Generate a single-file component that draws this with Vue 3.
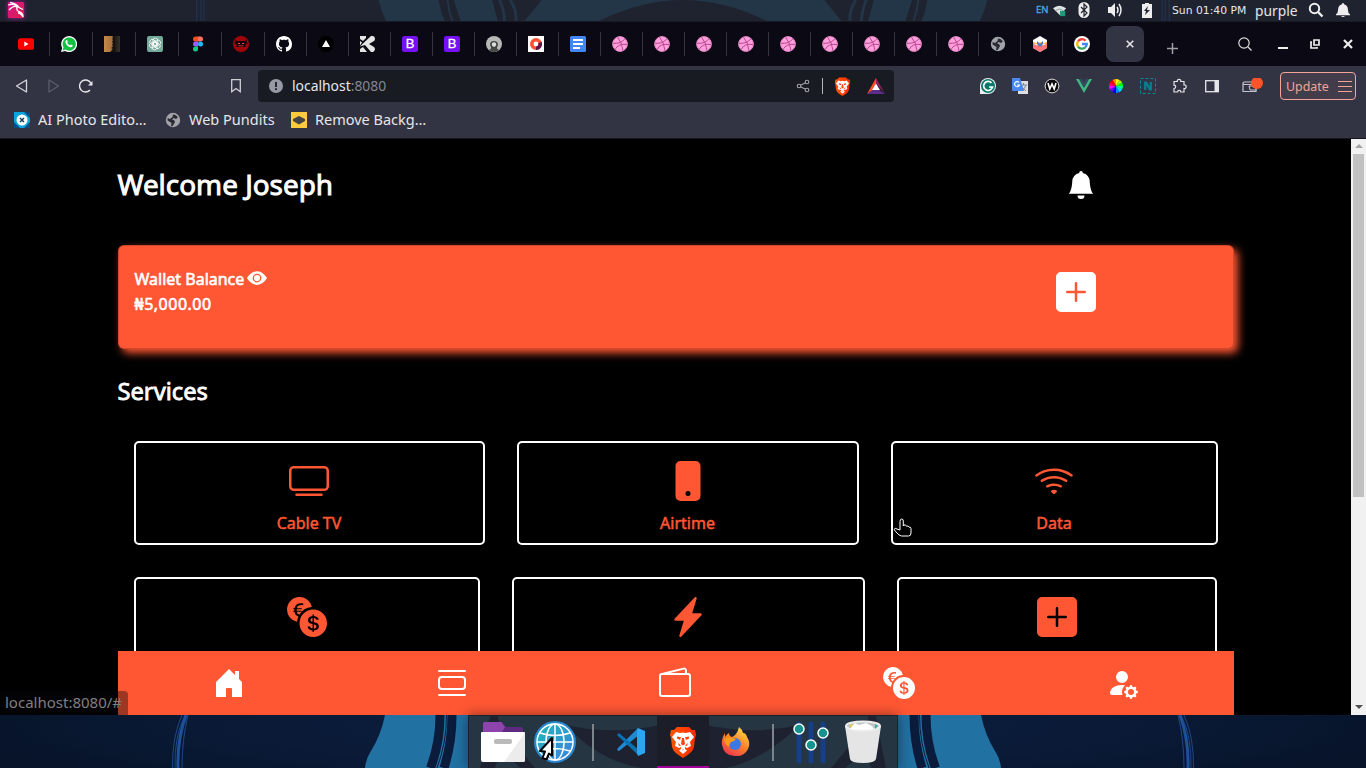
<script setup>
const tabs = [
  'yt', 'wa', 'book', 'gpt', 'figma', 'mask', 'github', 'vercel', 'kick', 'boot', 'boot', 'person', 'ring', 'docs',
  ...Array(9).fill('dribbble'), 'globe', 'hex', 'google',
]
const extensions = ['grammarly', 'translate', 'wcirc', 'vue', 'wheel', 'nbox', 'puzzle', 'panel']
const bookmarks = [
  { icon: 'xphoto', label: 'AI Photo Edito…', w: 152 },
  { icon: 'globe', label: 'Web Pundits', w: 126 },
  { icon: 'layers', label: 'Remove Backg…', w: 150 },
]
const rows = [
  { cls: 'first', items: [{ icon: 'tv', label: 'Cable TV' }, { icon: 'phone', label: 'Airtime' }, { icon: 'wifi', label: 'Data' }] },
  { cls: 'second', items: [{ icon: 'exchange' }, { icon: 'bolt' }, { icon: 'plus' }] },
]
const nav = ['house', 'list', 'wallet', 'exchange', 'gear']
const dock = ['files', 'web', '|', 'code', 'brave', 'firefox', '|', 'sliders', 'trash']
</script>

<template>
  <div class="desktop">
    <svg class="defs" width="0" height="0" aria-hidden="true">
      <defs>
        <linearGradient id="kali" x1="0" x2="1" y2="1"><stop stop-color="#d4148c" /><stop offset="1" stop-color="#e0204a" /></linearGradient>
        <linearGradient id="gweb" x1="0" x2="1" y1="0" y2="1"><stop stop-color="#22b9b4" /><stop offset="1" stop-color="#3a7ee8" /></linearGradient>
        <linearGradient id="gbrave" x1="0" x2="1"><stop stop-color="#ff5500" /><stop offset="1" stop-color="#ff2a00" /></linearGradient>
        <linearGradient id="gfox" x1=".8" x2=".2" y2="1"><stop stop-color="#ffe14a" /><stop offset=".45" stop-color="#ff8a2a" /><stop offset="1" stop-color="#f0304e" /></linearGradient>
        <linearGradient id="gwood" x1="0" x2="1"><stop stop-color="#c58a4a" /><stop offset=".5" stop-color="#a8723c" /><stop offset=".6" stop-color="#17130f" /><stop offset="1" stop-color="#37322c" /></linearGradient>
      </defs>
      <symbol id="yt" viewBox="0 0 16 16"><rect y="2.2" width="16" height="11.6" rx="2.6" fill="#f00" /><path d="M6.3 5.6v4.8L10.5 8z" fill="#fff" /></symbol>
      <symbol id="wa" viewBox="0 0 16 16"><path d="M0 16l1.2-4A8 8 0 1 1 4.2 15z" fill="#fff" /><path d="M1.6 14.4l.9-3A6.6 6.6 0 1 1 4.6 13.6z" fill="#12c143" /><path d="M4.9 4.4c.5-.6 1.1-.5 1.4.1l.5 1.2c.1.4-.6.9-.5 1.2.5 1 1.4 1.8 2.5 2.3.4.1.8-.9 1.2-.8l1.4.7c.6.3.3 1.3-.3 1.7-1.5.9-3.4 0-4.9-1.4S3.8 5.9 4.9 4.4z" fill="#fff" /></symbol>
      <symbol id="book" viewBox="0 0 16 16"><rect width="16" height="16" fill="url(#gwood)" /><path d="M11 0H9l1 2-2 1 2 1-2 2 2 1-2 2 2 1-3 2 2 1-3 3h5z" fill="#16120e" /></symbol>
      <symbol id="gpt" viewBox="0 0 16 16"><rect width="16" height="16" rx="2" fill="#75a99c" /><g fill="none" stroke="#fff" stroke-width=".8"><rect v-for="a in 6" :key="a" x="6" y="2.2" width="4.8" height="7.4" rx="2.2" :transform="`rotate(${a * 60} 8 8)`" /></g></symbol>
      <symbol id="figma" viewBox="0 0 16 16"><path d="M8 .5H5.500a2.500 2.500 0 0 0 0 5H8z" fill="#f24e1e" /><path d="M8 .5h2.500a2.500 2.500 0 0 1 0 5H8z" fill="#ff7262" /><path d="M8 5.500H5.500a2.500 2.500 0 0 0 0 5H8z" fill="#a259ff" /><circle cx="10.500" cy="8" r="2.500" fill="#1abcfe" /><path d="M8 10.500H5.500A2.500 2.500 0 1 0 8 13z" fill="#0acf83" /></symbol>
      <symbol id="mask" viewBox="0 0 16 16"><circle cx="8" cy="8" r="8" fill="#a0050a" /><path d="M2 3.500l2 1.500h8l2-1.500-.500 3L15 7l-2.500 1.500V11h-9V8.500L1 7l1.500-.500z" fill="#160206" /><path d="M5 7h2v1H5zm4 0h2v1H9zM5.500 9.500h5v.8h-5z" fill="#ff4c42" /></symbol>
      <symbol id="github" viewBox="0 0 16 16"><path fill="#fff" d="M8 0C3.580 0 0 3.580 0 8c0 3.540 2.290 6.530 5.470 7.590.4.070.55-.17.55-.38 0-.19-.01-.82-.01-1.490-2.010.37-2.530-.49-2.690-.94-.09-.23-.48-.94-.82-1.130-.28-.15-.68-.52-.01-.53.63-.01 1.080.58 1.230.82.72 1.210 1.870.87 2.330.66.07-.52.28-.87.51-1.070-1.780-.2-3.640-.89-3.640-3.950 0-.87.31-1.590.82-2.150-.08-.2-.36-1.020.08-2.120 0 0 .67-.21 2.200.82.64-.18 1.320-.27 2-.27s1.360.09 2 .27c1.530-1.040 2.200-.82 2.200-.82.44 1.100.16 1.920.08 2.120.51.56.82 1.270.82 2.150 0 3.070-1.870 3.750-3.650 3.950.29.25.54.73.54 1.480 0 1.070-.01 1.930-.01 2.200 0 .21.15.46.55.38A8.010 8.010 0 0 0 16 8c0-4.420-3.580-8-8-8" /></symbol>
      <symbol id="vercel" viewBox="0 0 16 16"><circle cx="8" cy="8" r="8" fill="#000" /><path d="M8 4l4 7H4z" fill="#fff" /></symbol>
      <symbol id="kick" viewBox="0 0 16 16"><path d="M0 0h6v2L3 5 0 3zM0 5l2 1.500-2 3zM0 10.500l3-3L11 0h2a3 3 0 0 1 1 5L9 8l5 3a3 3 0 0 1-1 5h-2L5 9zM0 16v-3l3-2 4 5z" fill="#e5e5e5" /></symbol>
      <symbol id="person" viewBox="0 0 16 16"><circle cx="8" cy="8" r="8" fill="#b8b9b6" /><path d="M4 9a4 4 0 1 1 8 0l-1 2v4H5v-4z" fill="#40433f" /><circle cx="8" cy="8.500" r="2.200" fill="#ddd" /><path d="M3 14q5-5 10 0-5 4-10 0" fill="#454845" /></symbol>
      <symbol id="ring" viewBox="0 0 16 16"><rect width="16" height="16" fill="#fff" /><circle cx="8" cy="8" r="4.200" fill="none" stroke="#ff5339" stroke-width="3.600" /><path d="M12 6.500A4.200 4.200 0 0 1 8 12.200" fill="none" stroke="#5c1746" stroke-width="3.600" /></symbol>
      <symbol id="docs" viewBox="0 0 16 16"><rect width="16" height="16" rx="1.500" fill="#4286f5" /><path d="M3 4h10M3 8h10M3 12h7" stroke="#fff" stroke-width="2" /></symbol>
      <symbol id="dribbble" viewBox="0 0 16 16"><circle cx="8" cy="8" r="7.400" fill="#ff9fdc" stroke="#e283c4" stroke-width="1" /><path d="M5.500 1.200Q10 6 11 14.800M1 7.300Q9 8 13 2.700M3 13.500Q6.500 7 15 8.500" fill="none" stroke="#b9478f" stroke-width="1" /></symbol>
      <symbol id="globe" viewBox="0 0 16 16"><circle cx="8" cy="8" r="7.200" fill="#a2a4aa" /><path d="M8 2.500c2 0 4 1 4.800 3L11 7 8.500 6 7 7.500l2 .5 1 2-2.500 4.200-1.500-.400L6.500 11 2.600 8.500 2.600 6 5 7l2.500-2z" fill="#292b34" /></symbol>
      <symbol id="hex" viewBox="0 0 16 16"><path d="M8 0l7 4v8l-7 4-7-4V4z" fill="#fff" /><path d="M1 5.500l3 1.500 4-1 4 1 3-1.500V8H1z" fill="#ffbc4d" /><path d="M1 7q4 4 7 1 3 3 7-1v5l-7 4-7-4z" fill="#f97777" /><path d="M5 5l3 3 3-3v3l-3 3-3-3z" fill="#4c76c8" /></symbol>
      <symbol id="google" viewBox="0 0 16 16"><circle cx="8" cy="8" r="8" fill="#fff" /><g fill="none" stroke-width="2.300"><path d="M11.500 4.700A4.800 4.800 0 0 0 4 5.400" stroke="#ea4335" /><path d="M4 5.400a4.800 4.800 0 0 0 0 5.200" stroke="#fbbc05" /><path d="M4 10.600a4.800 4.800 0 0 0 7 1" stroke="#34a853" /><path d="M11 11.600A4.800 4.800 0 0 0 12.800 8H8" stroke="#4285f4" /></g></symbol>

      <symbol id="grammarly" viewBox="0 0 16 16"><path d="M0 16V8a8 8 0 1 1 8 8z" fill="#e9eeee" /><circle cx="8" cy="8" r="7" fill="#08796a" /><path d="M11.500 5A4.500 4.500 0 1 0 12.500 9H9" fill="none" stroke="#fff" stroke-width="1.700" /></symbol>
      <symbol id="translate" viewBox="0 0 16 16"><rect x="6" y="3" width="10" height="13" fill="#dedede" /><path d="M8 7h7M11.500 5v2M14 7q-1 4-5 6M10 9l4 4" stroke="#778899" fill="none" /><path d="M0 0h8l4 13H1a1 1 0 0 1-1-1z" fill="#4a88ee" /><path d="M7 4.500A2.500 2.500 0 1 0 7.500 7H5" fill="none" stroke="#fff" stroke-width="1.100" /></symbol>
      <symbol id="wcirc" viewBox="0 0 16 16"><circle cx="8" cy="8" r="6.900" fill="#0a0a0a" stroke="#ddd" stroke-width="1" /><path d="M4 5l1.800 6L8 6l2.200 5L12 5" fill="none" stroke="#fff" stroke-width="1.600" /></symbol>
      <symbol id="vue" viewBox="0 0 16 16"><path d="M0 1h3l5 8.700L13 1h3L8 15z" fill="#41b883" /><path d="M3 1h3.200L8 4l1.800-3H13L8 9.700z" fill="#35495e" /></symbol>
      <symbol id="wheel" viewBox="0 0 16 16"><path v-for="(c, i) in ['#f4f800', '#f80', '#f00', '#f06', '#f0f', '#60f', '#00e', '#08f', '#0df', '#0f8', '#0f0', '#9f0']" :key="c" d="M8 8V1a7 7 0 0 1 3.500.940z" :fill="c" :transform="`rotate(${i * -30} 8 8)`" /></symbol>
      <symbol id="nbox" viewBox="0 0 16 16"><rect x=".5" y=".5" width="15" height="15" fill="none" stroke="#0c8796" stroke-dasharray="3 2" /><path d="M5.200 12V4.500h1l3.600 7h1V4" fill="none" stroke="#077f91" stroke-width="2.200" /></symbol>
      <symbol id="puzzle" viewBox="0 0 16 16"><path d="M2 3.500h3.300a1.800 1.800 0 1 1 3.500 0H12V7a1.800 1.800 0 1 1 0 3.500V14H8.800a1.600 1.600 0 0 0-3.200 0H2v-3.500a1.700 1.700 0 0 0 0-3.400z" fill="none" stroke="#e2e3e8" stroke-width="1.200" /></symbol>
      <symbol id="panel" viewBox="0 0 16 16"><rect x="1.700" y="2.700" width="12.600" height="11" fill="none" stroke="#e6e6ea" stroke-width="1.300" /><path d="M10.500 2h4v12h-4z" fill="#e6e6ea" /></symbol>
      <symbol id="purse" viewBox="0 0 22 16"><path d="M15 6V4H3.500A1.500 1.500 0 0 0 2 5.500v8h13v-2.500M2 5.500q0 1 1.500 1H15" fill="none" stroke="#c4c5cc" stroke-width="1.200" /><path d="M8 8h7v4H9z" fill="#323443" stroke="#c4c5cc" /><circle cx="16" cy="5" r="6" fill="#fb542b" /></symbol>
      <symbol id="xphoto" viewBox="0 0 16 16"><rect width="16" height="16" fill="#0aa4dd" /><path d="M0 10l6 6H0zM10 0h6v6zM16 10l-6 6h6z" fill="#064b85" /><circle cx="8" cy="8" r="5.500" fill="#fff" /><path d="M6 6l4 4m0-4l-4 4" stroke="#123c66" stroke-width="1.500" /></symbol>
      <symbol id="layers" viewBox="0 0 16 16"><rect width="16" height="16" fill="#ffca3c" /><path d="M2 7l6-3 6 3v2l-6 3.500L2 9z" fill="#454545" /></symbol>
      <symbol id="brave" viewBox="0 0 28 32"><path d="M8 1h12l3 3 3 0 1 5-1 3-1 9q-1 4-5 7l-6 4-6-4q-4-3-5-7L2 12 1 9l1-5 3 0z" fill="url(#gbrave)" /><path d="M7 6l4 1 3-.5 3 .5 4-1 4 5-4 5 1 4-4 2-2-1 0 2 2 1.500-4 3.500-4-3.500 2-1.500 0-2-2 1-4-2 1-4-4-5z" fill="#fff" /><path d="M8 10.500l4 .8-1 2.700-3-1.500zm12 0l-4 .8 1 2.700 3-1.500zM13 12h2l1 6-2 1.500-2-1.500zM9 17l3 2.500-2 .5zm10 0l-3 2.500 2 .5zM13 23.500h2l-1 .8z" fill="#ff4310" /></symbol>
      <symbol id="bat" viewBox="0 0 18 16"><path d="M9 0L0 16l9-6z" fill="#ff4b24" /><path d="M9 0v5l9 11z" fill="#9c1f63" /><path d="M0 16h18l-6-4H6z" fill="#5b2d8c" /><path d="M9 5.500l4 6.500H5z" fill="#fff" /></symbol>

      <symbol id="bell" viewBox="0 0 16 16"><path d="M8 16a2 2 0 0 0 2-2H6a2 2 0 0 0 2 2m.995-14.901a1 1 0 1 0-1.990 0A5 5 0 0 0 3 6c0 1.098-.5 6-2 7h14c-1.500-1-2-5.902-2-7 0-2.420-1.720-4.440-4.005-4.901" /></symbol>
      <symbol id="eye" viewBox="0 0 16 16"><path d="M10.500 8a2.500 2.500 0 1 1-5 0 2.500 2.500 0 0 1 5 0" /><path d="M0 8s3-5.500 8-5.500S16 8 16 8s-3 5.500-8 5.500S0 8 0 8m8 3.500a3.500 3.500 0 1 0 0-7 3.500 3.500 0 0 0 0 7" /></symbol>
      <symbol id="plus" viewBox="0 0 16 16"><path d="M2 0a2 2 0 0 0-2 2v12a2 2 0 0 0 2 2h12a2 2 0 0 0 2-2V2a2 2 0 0 0-2-2zm6.500 4.500v3h3a.5.5 0 0 1 0 1h-3v3a.5.5 0 0 1-1 0v-3h-3a.5.5 0 0 1 0-1h3v-3a.5.5 0 0 1 1 0" /></symbol>
      <symbol id="tv" viewBox="0 0 16 16"><path d="M2.500 13.500A.5.5 0 0 1 3 13h10a.5.5 0 0 1 0 1H3a.5.5 0 0 1-.5-.5M13.991 3l.024.001a1.500 1.500 0 0 1 .538.143.76.76 0 0 1 .302.254c.067.1.145.277.145.602v5.991l-.001.024a1.500 1.500 0 0 1-.143.538.76.76 0 0 1-.254.302c-.1.067-.277.145-.602.145H2.009l-.024-.001a1.500 1.500 0 0 1-.538-.143.76.76 0 0 1-.302-.254C1.078 10.502 1 10.325 1 10V4.009l.001-.024a1.500 1.500 0 0 1 .143-.538.76.76 0 0 1 .254-.302C1.498 3.078 1.675 3 2 3zM14 2H2C0 2 0 4 0 4v6c0 2 2 2 2 2h12c2 0 2-2 2-2V4c0-2-2-2-2-2" /></symbol>
      <symbol id="phone" viewBox="0 0 16 16"><path d="M3 2a2 2 0 0 1 2-2h6a2 2 0 0 1 2 2v12a2 2 0 0 1-2 2H5a2 2 0 0 1-2-2zm6 11a1 1 0 1 0-2 0 1 1 0 0 0 2 0" /></symbol>
      <symbol id="wifi" viewBox="0 0 16 16"><path d="M15.384 6.115a.485.485 0 0 0-.047-.736A12.440 12.440 0 0 0 8 3C5.259 3 2.723 3.882.663 5.379a.485.485 0 0 0-.048.736.52.52 0 0 0 .668.05A11.450 11.450 0 0 1 8 4c2.507 0 4.827.802 6.716 2.164.205.148.49.13.668-.049" /><path d="M13.229 8.271a.482.482 0 0 0-.063-.745A9.460 9.460 0 0 0 8 6c-1.905 0-3.680.56-5.166 1.526a.48.48 0 0 0-.063.745.525.525 0 0 0 .652.065A8.460 8.460 0 0 1 8 7a8.460 8.460 0 0 1 4.576 1.336c.206.132.48.108.653-.065m-2.183 2.183c.226-.226.185-.605-.1-.75A6.500 6.500 0 0 0 8 9c-1.060 0-2.062.254-2.946.704-.285.145-.326.524-.1.75l.015.015c.16.16.407.19.611.09A5.500 5.500 0 0 1 8 10c.868 0 1.690.201 2.420.56.203.1.45.07.61-.091zM9.060 12.440c.196-.196.198-.52-.04-.66A2 2 0 0 0 8 11.500a2 2 0 0 0-1.020.28c-.238.14-.236.464-.04.66l.706.706a.5.5 0 0 0 .707 0z" /></symbol>
      <symbol id="exchange" viewBox="0 0 16 16"><path d="M0 5a5 5 0 0 0 4.027 4.905 6.500 6.500 0 0 1 .544-2.073C3.695 7.536 3.132 6.864 3 5.910h-.5v-.426h.466V5.050q-.001-.07.004-.135H2.500v-.427h.511C3.236 3.240 4.213 2.500 5.681 2.500c.316 0 .59.031.819.085v.733a3.500 3.500 0 0 0-.815-.082c-.919 0-1.538.466-1.734 1.252h1.917v.427h-1.980q-.004.07-.003.147v.422h1.983v.427H3.930c.118.602.468 1.030 1.005 1.229a6.500 6.500 0 0 1 4.970-3.113A5.002 5.002 0 0 0 0 5m16 5.500a5.500 5.500 0 1 1-11 0 5.500 5.500 0 0 1 11 0m-7.750 1.322c.069.835.746 1.485 1.964 1.562V14h.54v-.62c1.259-.086 1.996-.74 1.996-1.690 0-.865-.563-1.310-1.570-1.540l-.426-.1V8.374c.54.06.884.347.966.745h.948c-.07-.804-.779-1.433-1.914-1.502V7h-.54v.629c-1.076.103-1.808.732-1.808 1.622 0 .787.544 1.288 1.450 1.493l.358.085v1.780c-.554-.08-.92-.376-1.003-.787zm1.960-1.895c-.532-.12-.82-.364-.82-.732 0-.41.311-.719.824-.809v1.540h-.003zm.622 1.044c.645.145.943.38.943.796 0 .474-.37.8-1.020.86v-1.674z" /></symbol>
      <symbol id="bolt" viewBox="0 0 16 16"><path d="M11.251.068a.5.5 0 0 1 .227.58L9.677 6.500H13a.5.5 0 0 1 .364.843l-8 8.500a.5.5 0 0 1-.842-.49L6.323 9.500H3a.5.5 0 0 1-.364-.843l8-8.500a.5.5 0 0 1 .615-.09z" /></symbol>
      <symbol id="house" viewBox="0 0 32 32"><path d="M16 2l6 6V4h4v8l3 3v15H19v-8q0-1-1-1h-4q-1 0-1 1v8H3V15z" /></symbol>
      <symbol id="list" viewBox="0 0 16 16"><path d="M3 4.500h10a2 2 0 0 1 2 2v3a2 2 0 0 1-2 2H3a2 2 0 0 1-2-2v-3a2 2 0 0 1 2-2m0 1a1 1 0 0 0-1 1v3a1 1 0 0 0 1 1h10a1 1 0 0 0 1-1v-3a1 1 0 0 0-1-1zM1 2a.5.5 0 0 1 .5-.5h13a.5.5 0 0 1 0 1h-13A.5.5 0 0 1 1 2m0 12a.5.5 0 0 1 .5-.5h13a.5.5 0 0 1 0 1h-13A.5.5 0 0 1 1 14" /></symbol>
      <symbol id="wallet" viewBox="0 0 16 16"><path d="M12.136.326A1.500 1.500 0 0 1 14 1.780V3h.5A1.500 1.500 0 0 1 16 4.500v9a1.500 1.500 0 0 1-1.500 1.500h-13A1.500 1.500 0 0 1 0 13.500v-9a1.500 1.500 0 0 1 1.432-1.499zM5.562 3H13V1.780a.5.5 0 0 0-.621-.484zM1.500 4a.5.5 0 0 0-.5.5v9a.5.5 0 0 0 .5.5h13a.5.5 0 0 0 .5-.5v-9a.5.5 0 0 0-.5-.5z" /></symbol>
      <symbol id="gear" viewBox="0 0 16 16"><path d="M11 5a3 3 0 1 1-6 0 3 3 0 0 1 6 0m-9 8c0 1 1 1 1 1h5.256A4.500 4.500 0 0 1 8 12.500a4.500 4.500 0 0 1 1.544-3.393Q8.844 9.002 8 9c-5 0-6 3-6 4m9.886-3.540c.18-.613 1.048-.613 1.229 0l.043.148a.64.64 0 0 0 .921.382l.136-.074c.561-.306 1.175.308.87.869l-.075.136a.64.64 0 0 0 .382.92l.149.045c.612.18.612 1.048 0 1.229l-.15.043a.64.64 0 0 0-.38.921l.074.136c.305.561-.309 1.175-.87.87l-.136-.075a.64.64 0 0 0-.92.382l-.045.149c-.18.612-1.048.612-1.229 0l-.043-.15a.64.64 0 0 0-.921-.38l-.136.074c-.561.305-1.175-.309-.87-.87l.075-.136a.64.64 0 0 0-.382-.92l-.148-.044c-.613-.181-.613-1.049 0-1.230l.148-.043a.64.64 0 0 0 .382-.921l-.074-.136c-.306-.561.308-1.175.869-.87l.136.075a.64.64 0 0 0 .92-.382zM14 12.500a1.500 1.500 0 1 0-3 0 1.500 1.500 0 0 0 3 0" /></symbol>

      <symbol id="files" viewBox="0 0 52 52"><path d="M6 21V9q0-2 2-2h17l4 5h15q2 0 2 2v7z" fill="#5e2a80" /><path d="M6 20V9q0-2 2-2h16l4 5-3 5H6z" fill="#8e44ad" /><path d="M4 18q0-1 1-1h42q1 0 1 1v27q0 2-2 2H6q-2 0-2-2z" fill="#fff" /><path d="M48 18v27q0 2-2 2H27z" fill="#ececec" /><rect x="17" y="24" width="18" height="5" rx="2" fill="#bababa" /></symbol>
      <symbol id="web" viewBox="0 0 52 52"><circle cx="26" cy="27" r="20" fill="url(#gweb)" stroke="#2a86cf" stroke-width="2" /><g fill="none" stroke="#fff" stroke-width="1.500"><circle cx="26" cy="27" r="18" /><ellipse cx="26" cy="27" rx="9" ry="18" /><path d="M26 9v36M8 27h36M11 18q15 5 30 0M11 36q15-5 30 0" /></g><path d="M23 23v17.500l-3-2-2.500 6-4-1.500 2.500-6.500-5-.500z" fill="#fff" stroke="#000" stroke-width="2" stroke-linejoin="round" /></symbol>
      <symbol id="code" viewBox="0 0 52 52"><path d="M33 13l-20 20-1 2 2 1 20-16z" fill="#1f8ad2" /><path d="M12 20l2-2 20 17-1 5z" fill="#0870b5" /><path d="M33 13l7 3v22l-7 3-1-3V16z" fill="#2ba7f0" /></symbol>
      <symbol id="firefox" viewBox="0 0 52 52"><path d="M30 12q3 2 4 6 3 0 4 4 4 6 1 12-4 8-13 7-11 0-13-11-1-6 3-12v4q2-3 4-4 0 3 3 4 5-2 7-10z" fill="url(#gfox)" /><circle cx="26" cy="29" r="6" fill="#3a78e8" /><path d="M15 24q5-3 12 0-2 3-5 3-2 2-2 5-4-2-5-8z" fill="#ff9a1d" /></symbol>
      <symbol id="sliders" viewBox="0 0 52 52"><path d="M14 9v37M26 9v37M38 9v37" stroke="#173f88" stroke-width="5" stroke-linecap="round" /><g fill="#14938f" stroke="#fff" stroke-width="1.500"><circle cx="14" cy="14" r="5" /><circle cx="26" cy="30" r="5" /><circle cx="38" cy="18" r="5" /></g></symbol>
      <symbol id="trash" viewBox="0 0 52 52"><path d="M8 11l5 33q1 4 13 4t13-4l5-33z" fill="#e5e5e5" /><ellipse cx="26" cy="11" rx="17" ry="4.500" fill="#bfc4c4" stroke="#eee" stroke-width="2" /><path d="M14 12l4-4 4 2 7-2 6 3 2 3q-11 2-23 0z" fill="#fff" /><path d="M12 10l4-1-2 4z" fill="#ecc84b" /><path d="M38 9l3 2-3 3z" fill="#38a9a0" /></symbol>
    </svg>

    <header class="panel">
      <svg class="wall" viewBox="0 0 1366 22">
        <g v-for="m in 2" :key="m" :transform="m === 2 ? 'matrix(-1 0 0 1 1366 0)' : ''">
          <path d="M173.500 0v22M178 0v22M181 0v22" stroke="#21314c" stroke-width="1.500" />
          <path d="M364 0q3 12 8 22h61q-4-10-6-22z" fill="#233647" />
          <path d="M436.500 0q1 12 5 22" stroke="#233647" stroke-width="2" fill="none" />
          <path d="M443 0H483l6 22H450z" fill="#233647" />
          <path d="M491 0q5 12 5 22M502 0q7 11 6 22" stroke="#233647" stroke-width="3" fill="none" />
          <path d="M535 0H683Q640 0 595 22H517z" fill="#233647" />
        </g>
      </svg>
      <svg class="kali" viewBox="0 0 18 18"><rect x="1" y="1" width="16" height="16" rx="1" fill="url(#kali)" /><path d="M1 4q6-2 10 2M3 1.500q6 1 9 5l4 2M2 9q5-5 8-3-1 4 3 5 3 1 3 5-2-4-5-4" fill="none" stroke="#fff" stroke-width="1.300" /></svg>
      <span class="lang">EN</span>
      <svg class="ic wf" viewBox="0 0 16 16"><path d="M0 6q7-6 15 0l-7 8z" fill="#dfe2e4" /><path d="M3 9q4-4 9 0" stroke="#8a8e94" fill="none" /><rect x="8" y="9" width="6" height="6" fill="#23977a" /></svg>
      <svg class="ic bt" viewBox="0 0 16 16"><rect x="2.500" width="11" height="16" rx="5.500" fill="#eee" /><path d="M5 5l6 6-3 3V2l3 3-6 6" fill="none" stroke="#222733" stroke-width="1.200" /></svg>
      <svg class="ic vol" viewBox="0 0 16 16"><path d="M1 5h3l4-4v14l-4-4H1z" fill="#eee" /><path d="M10 5q2 3 0 6M12 2q4 6 0 12" fill="none" stroke="#eee" stroke-width="1.500" /></svg>
      <svg class="ic batt" viewBox="0 0 16 16"><path d="M3 2h3V1h4v1h3v14H3z" fill="#eee" /><path d="M9 4L5 9h2l-1 4 5-5H8z" fill="#222733" /></svg>
      <span class="clock">Sun 01:40 PM</span>
      <span class="user">purple</span>
      <svg class="ic sr" viewBox="0 0 16 16"><circle cx="6.500" cy="6.500" r="4.700" fill="none" stroke="#eee" stroke-width="2" /><path d="M10 10l4.500 4.500" stroke="#eee" stroke-width="2.400" /></svg>
      <svg class="ic bl" viewBox="0 0 16 16" fill="#eee"><path d="M8 1q1 0 1 1.200 4 1 4 6 0 3 2 4v1H1v-1q2-1 2-4 0-5 4-6Q7 1 8 1M6 14h4q-2 2-4 0" /></svg>
    </header>

    <div class="tabs">
      <div v-for="(t, i) in tabs" :key="i" class="tab" :class="{ wide: i < 6, last: i === 25 }"><span v-if="t === 'boot'" class="boot">B</span><svg v-else><use :href="'#' + t" /></svg></div>
      <div class="active"><svg viewBox="0 0 8 8"><path d="M.7.7l6.600 6.600m0-6.600L.7 7.300" stroke="#e8e8ee" stroke-width="1.500" /></svg></div>
      <svg class="add" viewBox="0 0 11 11"><path d="M5.500 0v11M0 5.500h11" stroke="#9e9ea5" stroke-width="1.500" /></svg>
      <svg class="find" viewBox="0 0 14 14"><circle cx="6" cy="6" r="5.200" fill="none" stroke="#ddd" stroke-width="1.200" /><path d="M10 10l3.500 3.500" stroke="#ddd" stroke-width="1.300" /></svg>
      <svg class="win min" viewBox="0 0 10 10"><path d="M0 9h10" stroke="#eee" stroke-width="2" /></svg>
      <svg class="win max" viewBox="0 0 10 10"><path d="M4 1h5v5H4zM2 3H1v6h6V8" fill="none" stroke="#eee" stroke-width="1.700" /></svg>
      <svg class="win cls" viewBox="0 0 10 10"><path d="M1 1l8 8m0-8L1 9" stroke="#eee" stroke-width="2.200" /></svg>
    </div>

    <div class="bar">
      <svg class="nv" viewBox="0 0 16 16"><path d="M12.500 2v12L2.500 8z" fill="none" stroke="#d3d4da" stroke-width="1.300" stroke-linejoin="round" /></svg>
      <svg class="nv" viewBox="0 0 16 16"><path d="M3 2v12L12.500 8z" fill="none" stroke="#5a5c69" stroke-width="1.300" stroke-linejoin="round" /></svg>
      <svg class="nv" viewBox="0 0 16 16"><path d="M12 12A6 6 0 1 1 13 5.500" fill="none" stroke="#e8e8ec" stroke-width="1.400" /><path d="M14.500 3v4.500H10z" fill="#e8e8ec" /></svg>
      <svg class="nv bm" viewBox="0 0 16 16"><path d="M3.700 1.700h8.600v12L8 10.500l-4.300 3.200z" fill="none" stroke="#cfd0d6" stroke-width="1.300" /></svg>
      <div class="url">
        <svg class="info" viewBox="0 0 14 14"><circle cx="7" cy="7" r="7" fill="#979aa4" /><path d="M7 3v5M7 9.200v1.800" stroke="#191b22" stroke-width="1.800" /></svg>
        <span>localhost<i>:8080</i></span>
        <svg class="share" viewBox="0 0 14 14"><path d="M3 7l8-4M3 7l8 4" stroke="#a2a3a8" stroke-width="1.100" /><g fill="#191b22" stroke="#a2a3a8" stroke-width="1.100"><circle cx="3" cy="7" r="1.800" /><circle cx="11" cy="3" r="1.800" /><circle cx="11" cy="11" r="1.800" /></g></svg>
        <b class="vr"></b>
        <svg class="lion"><use href="#brave" /></svg>
        <svg class="tri"><use href="#bat" /></svg>
      </div>
      <div class="exts"><svg v-for="e in extensions" :key="e"><use :href="'#' + e" /></svg></div>
      <svg class="purse"><use href="#purse" /></svg>
      <div class="update"><span>Update</span><svg viewBox="0 0 14 11"><path d="M0 .5h14M0 5.500h14M0 10.500h14" stroke="#f2a49b" stroke-width="1.100" /></svg></div>
    </div>

    <div class="marks">
      <div v-for="b in bookmarks" :key="b.label" class="mark" :style="{ width: b.w + 'px' }"><svg><use :href="'#' + b.icon" /></svg><span>{{ b.label }}</span></div>
    </div>

    <main class="page">
      <section class="view">
        <div class="content">
          <div class="hello"><h1>Welcome Joseph</h1><svg><use href="#bell" /></svg></div>
          <div class="card">
            <div><p>Wallet Balance <svg><use href="#eye" /></svg></p><p class="sum">₦5,000.00</p></div>
            <svg class="plus"><use href="#plus" /></svg>
          </div>
          <h2>Services</h2>
          <div v-for="r in rows" :key="r.cls" class="row" :class="r.cls">
            <div v-for="s in r.items" :key="s.icon" class="svc"><svg><use :href="'#' + s.icon" /></svg><span v-if="s.label">{{ s.label }}</span></div>
          </div>
        </div>
        <nav class="bottom"><a v-for="n in nav" :key="n"><svg><use :href="'#' + n" /></svg></a></nav>
        <div class="status">localhost:8080/#</div>
        <svg class="hand" viewBox="0 0 20 20"><path d="M8 12V3.500Q8 1 9.700 1t1.600 2V8q.400-1.500 2-1 .900.300 1 1.200 2-.800 2.700.900 2-.400 2 1.400v4.500q0 3-2.500 3H9.500Q7 17.500 5 15L2 11.500q1-2 3-.5z" fill="#000" stroke="#fff" stroke-width="1" /></svg>
      </section>
      <aside class="scroll"><i class="up"></i><b></b><i class="down"></i></aside>
    </main>

    <footer class="foot">
      <svg class="wall" viewBox="0 0 1366 53">
        <g v-for="m in 2" :key="m" :transform="m === 2 ? 'matrix(-1 0 0 1 1366 0)' : ''">
          <path d="M182 0Q172 22 172.500 53M185 0Q174 22 175 53M188 0Q182 25 182 53" stroke="#1d478a" fill="none" />
          <path d="M186 0Q177 25 178 53" stroke="#1f509c" stroke-width="3" fill="none" />
          <path d="M385 0Q381 20 371 36 366 43 365 53H500V0z" fill="#2171a2" />
          <path d="M440 0Q440 28 430.500 53M452 0Q452 28 444 53" stroke="#0b1b3b" stroke-width="9" fill="none" />
          <path d="M446.500 0Q446.500 28 437 53" stroke="#0b1b3b" stroke-width="1" fill="none" />
        </g>
      </svg>
      <div class="dock">
        <svg class="dockbg" viewBox="0 0 430 53"><path d="M98 9Q155 22 215 3 275 22 332 9 285 53 245 53H185Q135 50 98 9zM22 0h8l0 4q14 22 38 49H54L34 36 26 53H12zM408 0h-8v4q-14 22-38 49h14l20-17 8 17h14z" fill="#1e2230" /></svg>
        <div v-for="(d, i) in dock" :key="i" :class="[d === '|' ? 'sep' : 'app', { on: d === 'brave' }]"><svg v-if="d !== '|'" :class="d"><use :href="'#' + d" /></svg></div>
      </div>
    </footer>
  </div>
</template>

<style>
html, body { margin: 0; overflow: hidden; background: #000; }
</style>

<style scoped>
* { box-sizing: border-box; }
svg { flex: none; display: block; }
.defs { position: absolute; }
.desktop { width: 1366px; height: 768px; display: flex; flex-direction: column; overflow: hidden; font-family: "Noto Sans", "Open Sans", sans-serif; color: #e6e6ea; }
.panel { height: 22px; flex: none; background: #1f2330; position: relative; display: flex; align-items: center; padding-left: 7px; border-bottom: 1px solid #171923; }
.wall { position: absolute; left: 0; top: 0; width: 1366px; height: 100%; }
.panel > :not(.wall) { position: relative; }
.kali { width: 18px; height: 18px; margin-top: -2px; filter: drop-shadow(0 0 2px #b0159a); }
.lang { margin-left: 1011px; font-size: 9.5px; color: #4ba0dc; width: 17px; line-height: 18px; margin-top: -2px; -webkit-text-stroke: .4px currentColor; }
.ic { width: 16px; height: 16px; margin-top: -2px; }
.wf { width: 14px; height: 14px; }
.bt { margin-left: 9px; }
.vol { margin-left: 15px; }
.batt { margin-left: 16px; }
.clock { margin-left: 17px; width: 83px; font: 10.8px/20px "DejaVu Sans", sans-serif; white-space: nowrap; }
.user { width: 53px; font-size: 13.8px; line-height: 20px; }
.bl { margin-left: 11px; }
.tabs { height: 44px; flex: none; background: #0b0a14; display: flex; align-items: center; padding-left: 7px; }
.tab { width: 42px; height: 24px; padding: 4px 0 0 11px; border-right: 1px solid #34353b; }
.tab.wide { width: 43px; }
.tab.last { border-color: transparent; }
.tab svg { width: 16px; height: 16px; }
.boot { display: block; width: 16px; height: 16px; border-radius: 2.5px; background: #7610f5; color: #fff; font: 13px/16px "Liberation Sans", sans-serif; text-align: center; -webkit-text-stroke: .3px #fff; }
.active { width: 38px; height: 36px; margin-left: 1px; border-radius: 8px; background: #323443; display: flex; align-items: center; padding-left: 20px; }
.active svg { width: 8px; height: 8px; }
.add { width: 11px; height: 11px; margin: 8px 0 0 23px; }
.find { width: 14px; height: 14px; margin-left: 60px; }
.win { width: 10px; height: 10px; }
.min { margin-left: 26px; }
.max { margin-left: 22px; }
.cls { margin-left: 23px; }
.bar { height: 40px; flex: none; background: #323443; display: flex; align-items: center; padding-left: 14px; }
.nv { width: 16px; height: 16px; margin-right: 16px; }
.bm { margin: 0 14px 0 118px; }
.url { width: 636px; height: 32px; border-radius: 4px; background: #191b22; display: flex; align-items: center; padding-left: 11px; font-size: 13.9px; }
.info { width: 14px; height: 14px; margin-right: 9px; }
.url span { width: 504px; margin-top: -2px; }
.url i { font-style: normal; color: #85878e; }
.share { width: 14px; height: 14px; }
.vr { width: 1px; height: 16px; background: #b5b6bb; margin: 0 11px 0 12px; }
.lion { width: 17px; height: 19px; }
.tri { width: 18px; height: 16px; margin-left: 16px; }
.exts { display: flex; gap: 16px; margin-left: 86px; }
.exts svg { width: 16px; height: 16px; }
.purse { width: 22px; height: 16px; margin-left: 21px; }
.update { width: 76px; height: 28px; margin-left: 17px; border: 1px solid #f2a49b; border-radius: 4px; background: #433d4b; color: #f2a49b; font-size: 12.4px; display: flex; align-items: center; padding-left: 5px; }
.update span { width: 52px; }
.update svg { width: 14px; height: 11px; }
.marks { height: 33px; flex: none; background: #323443; border-bottom: 1px solid #16171d; display: flex; padding: 5px 0 0 14px; font-size: 14.5px; }
.mark { display: flex; height: 18px; align-items: center; white-space: nowrap; }
.mark:nth-child(2) { margin-left: -1px; }
.mark svg { width: 16px; height: 16px; margin-right: 8px; }
.mark span { margin-top: -2px; }
.page { height: 576px; flex: none; display: flex; background: #000; overflow: hidden; }
.view { width: 1351px; position: relative; overflow: hidden; }
.content { width: 1116px; margin-left: 117.5px; color: #fff; }
.hello { height: 106px; padding-top: 23px; display: flex; justify-content: space-between; }
h1, h2, p { margin: 0; font-weight: 400; -webkit-text-stroke: .6px currentColor; }
h1 { font-size: 27.9px; line-height: 44px; -webkit-text-stroke-width: .9px; }
.hello svg { width: 28px; height: 28px; margin: 9px 138.5px 0 0; fill: #fff; }
.card { height: 104px; background: #ff5733; border: 1px solid rgba(0, 0, 0, .175); border-radius: 6px; box-shadow: 4px 4px 8px #ff5733; display: flex; justify-content: space-between; padding: 21px 136.5px 0 16px; }
.card p { font-size: 16px; height: 25px; line-height: 25px; display: flex; white-space: pre; }
.card p.sum { letter-spacing: .5px; }
.card p svg { width: 20px; height: 20px; fill: #fff; stroke: none; margin: 1px 0 0 -1px; }
.plus { width: 40px; height: 40px; fill: #fff; margin-top: 5px; }
h2 { font-size: 23.7px; line-height: 36px; margin-top: 24px; height: 68px; -webkit-text-stroke-width: .8px; }
.row { display: grid; gap: 32px; margin: 0 16px 32px; }
.first { grid-template-columns: 351fr 342fr 327fr; }
.second { grid-template-columns: 346fr 353fr 320fr; margin-right: 16.5px; }
.svc { height: 104px; border: 2px solid #fff; border-radius: 5px; color: #ff5733; display: flex; flex-direction: column; align-items: center; padding-top: 18px; font-size: 16px; line-height: 24px; -webkit-text-stroke: .5px currentColor; }
.svc svg { width: 40px; height: 40px; fill: #ff5733; stroke: none; margin-bottom: 10px; }
.bottom { position: absolute; left: 117.5px; bottom: 0; width: 1116px; height: 64px; background: #ff5733; display: grid; grid-template-columns: repeat(5, 1fr); }
.bottom a { display: flex; align-items: center; justify-content: center; }
.bottom svg { width: 32px; height: 32px; fill: #fff; }
.status { position: absolute; left: 0; bottom: 0; width: 128px; height: 24px; background: rgba(8, 8, 16, .4); border-top-right-radius: 4px; color: #807f81; font-size: 15px; line-height: 23px; padding-left: 5px; }
.hand { position: absolute; left: 892px; top: 379px; width: 20px; height: 20px; }
.scroll { width: 15px; background: #f1f1f1; display: flex; flex-direction: column; align-items: center; }
.scroll b { width: 11px; height: 343px; margin-top: 6px; background: #c1c1c1; }
.scroll i { border: 4px solid transparent; width: 0; height: 0; }
.scroll .up { border-bottom-color: #a3a3a3; border-top: 0; margin-top: 5px; }
.scroll .down { border-top-color: #505050; border-bottom: 0; margin-top: auto; margin-bottom: 6px; }
.foot { height: 53px; flex: none; position: relative; background: radial-gradient(ellipse 720px 75px at 683px 10px, #0c2044, #0a1a36 65%, #07142a); }
.dock { position: relative; width: 430px; height: 53px; margin-left: 468px; background: #253542; border: 1px solid #182530; border-bottom: 0; box-shadow: 0 0 12px rgba(0, 0, 0, .45); display: flex; padding-left: 8px; }
.dockbg { position: absolute; left: -1px; top: 0; width: 430px; height: 53px; }
.app { position: relative; width: 52px; height: 52px; display: flex; justify-content: center; }
.app svg { width: 52px; height: 52px; margin-top: -1px; }
.app svg.brave { width: 28px; height: 32px; margin-top: 10px; }
.on { background: #1b1e29; border-bottom: 2px solid #a3009b; }
.sep { position: relative; width: 24px; display: flex; justify-content: center; }
.sep::before { content: ""; width: 2px; height: 37px; margin-top: 8px; background: #7c858c; }
</style>
